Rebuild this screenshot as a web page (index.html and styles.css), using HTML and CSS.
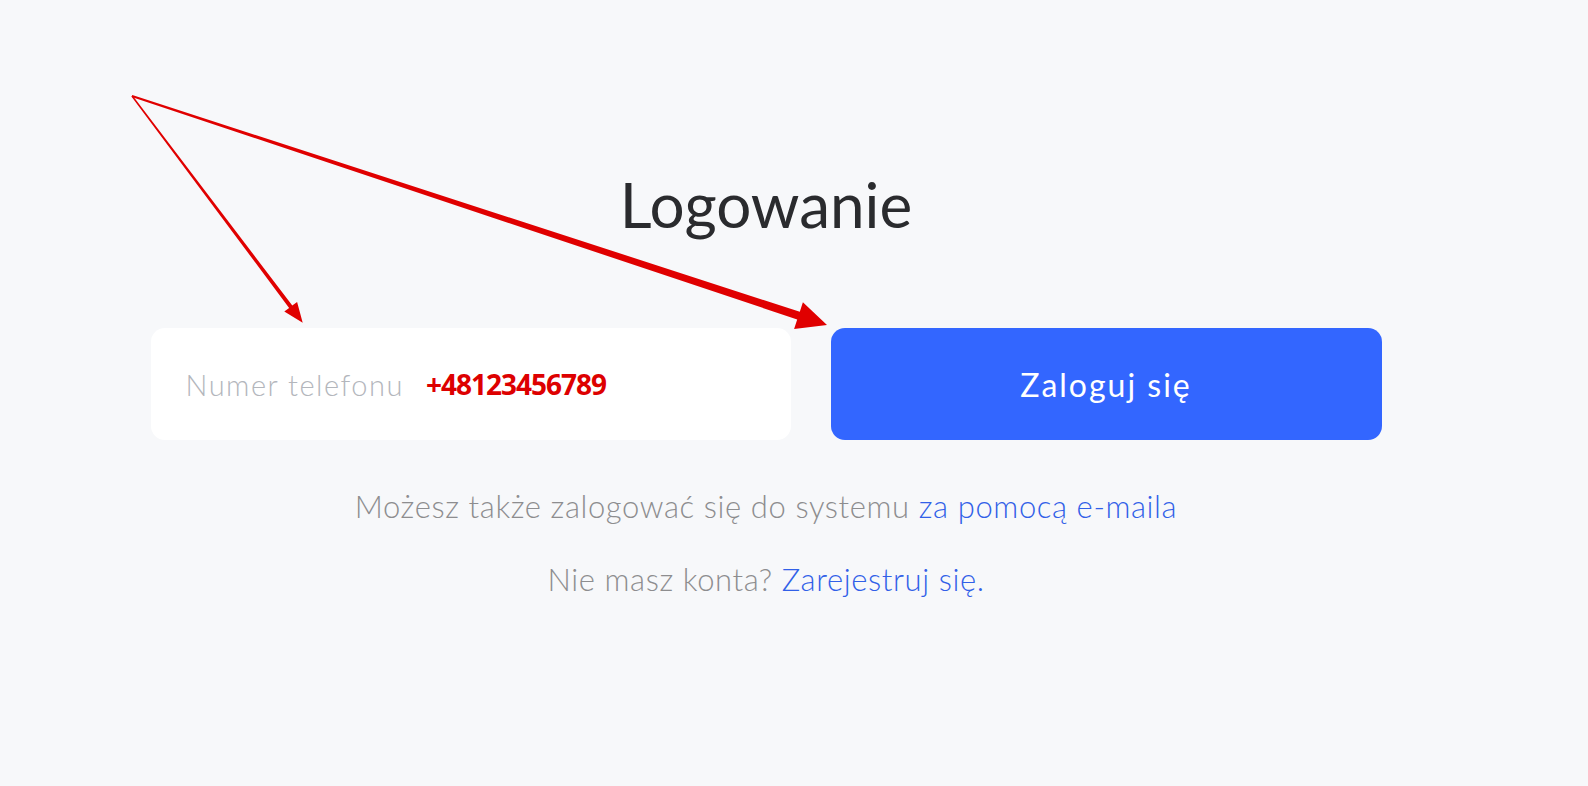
FILE: index.html
```html
<!DOCTYPE html>
<html lang="pl">

<head>
    <meta charset="UTF-8" />
    <meta name="viewport" content="width=device-width, initial-scale=1.0" />
    <title>Logowanie</title>
    <link rel="stylesheet" href="styles.css">
</head>

<body>
    <div class="page">
        <h1>Logowanie</h1>

        <div class="login-row">
            <label class="phone-field">
                <span class="phone-label">Numer telefonu</span>
                <span class="phone-value">+48123456789</span>
            </label>
            <button class="login-btn">Zaloguj się</button>
        </div>

        <p class="hint">Możesz także zalogować się do systemu <a href="#">za pomocą e-maila</a></p>
        <p class="hint">Nie masz konta? <a href="#">Zarejestruj się.</a></p>
    </div>

    <!-- annotation arrows -->
    <svg class="arrows" width="1588" height="786" viewBox="0 0 1588 786">
        <polygon points="132.6,95.6 292.3,305.5 297.1,301.9 302.7,322.7 284.3,311.5 289.1,307.9 131.4,96.4" />
        <polygon points="132.3,95 799.8,311.8 802.9,302.3 827,325 794.1,328.9 797.2,319.4 131.7,97" />
    </svg>
</body>

</html>
```

FILE: styles.css
```css
body {
    margin: 0;
    font-family: Lato, "Open Sans", sans-serif;
    background: #f7f8fa;
    height: 786px;
    overflow: hidden;
}

.page {
    display: flex;
    flex-direction: column;
    align-items: center;
    padding: 164px 56px 0 0;
}

h1 {
    margin: 0;
    font-size: 62px;
    font-weight: 400;
    color: #2a2b2e;
    line-height: 80px;
}

.login-row {
    display: flex;
    gap: 40px;
    margin-top: 84px;
}

.phone-field {
    width: 640px;
    height: 112px;
    box-sizing: border-box;
    background: white;
    border-radius: 14px;
    display: flex;
    align-items: center;
    padding-left: 35px;
    gap: 22px;
}

.phone-label {
    font-size: 29px;
    letter-spacing: 1.5px;
    color: #b3b6bc;
    font-weight: 300;
}

.phone-value {
    font-family: "Open Sans", sans-serif;
    font-size: 28px;
    font-weight: 700;
    letter-spacing: -1px;
    color: #dd0000;
}

.login-btn {
    width: 551px;
    height: 112px;
    border: none;
    border-radius: 14px;
    background: #3366ff;
    color: white;
    font-family: inherit;
    font-size: 32px;
    letter-spacing: 2px;
    cursor: pointer;
}

.hint {
    margin: 0;
    font-size: 31px;
    letter-spacing: 0.6px;
    color: #8d8d8f;
    font-weight: 300;
}

.login-row + .hint {
    margin-top: 47px;
}

.hint + .hint {
    margin-top: 35px;
}

.hint a {
    color: #3160e8;
    text-decoration: none;
}

.arrows {
    position: absolute;
    left: 0;
    top: 0;
    pointer-events: none;
    fill: #e00000;
}
```
